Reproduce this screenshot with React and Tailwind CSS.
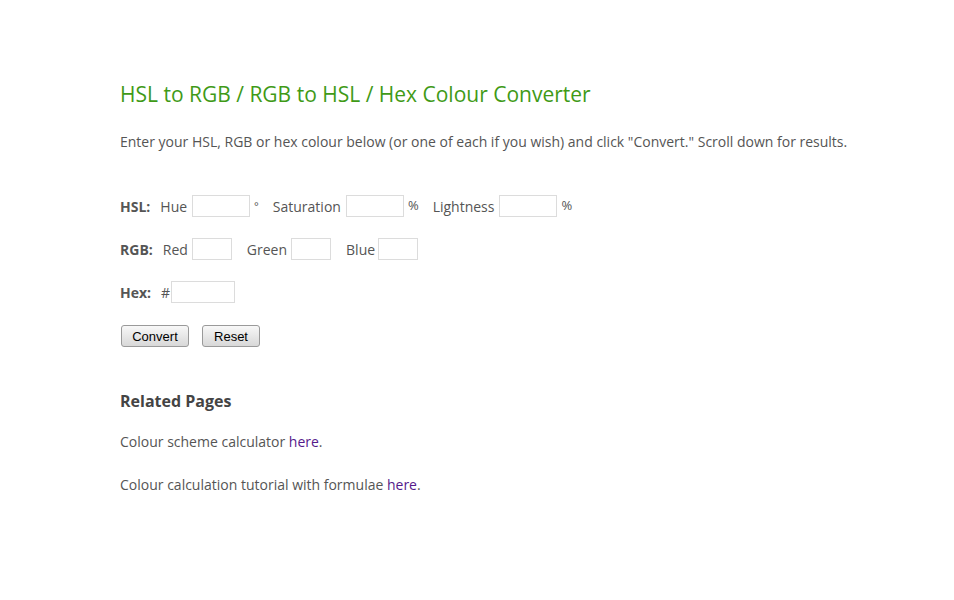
export default function App() {
  const input = 'h-[22px] border border-[#dcdcdc] bg-white outline-none'
  const btn =
    'h-[22px] rounded-[3px] border border-[#9a9a9a] bg-gradient-to-b from-[#f8f8f8] to-[#d8d8d8] text-[13px] leading-none text-black'

  return (
    <div className="min-h-[600px] bg-white pl-[120px] pt-[80px] text-[14px] text-[#555] [font-family:'Open_Sans',sans-serif]">
      <h1 className="text-[21px] leading-[29px] text-[#3f9a17]">
        HSL to RGB / RGB to HSL / Hex Colour Converter
      </h1>
      <p className="mt-[23px] leading-[20px]">
        Enter your HSL, RGB or hex colour below (or one of each if you wish) and click "Convert." Scroll down for results.
      </p>

      <div className="mt-[43px] flex h-[22px] items-center">
        <span className="font-bold">HSL:</span>
        <span className="ml-[10px]">Hue</span>
        <input className={`ml-[5px] w-[58px] ${input}`} />
        <span className="ml-[4px] text-[11px]">°</span>
        <span className="ml-[14px]">Saturation</span>
        <input className={`ml-[5px] w-[58px] ${input}`} />
        <span className="ml-[4px] text-[13px]">%</span>
        <span className="ml-[14px]">Lightness</span>
        <input className={`ml-[5px] w-[58px] ${input}`} />
        <span className="ml-[4px] text-[13px]">%</span>
      </div>

      <div className="mt-[21px] flex h-[22px] items-center">
        <span className="font-bold">RGB:</span>
        <span className="ml-[10px]">Red</span>
        <input className={`ml-[4px] w-[40px] ${input}`} />
        <span className="ml-[15px]">Green</span>
        <input className={`ml-[4px] w-[40px] ${input}`} />
        <span className="ml-[15px]">Blue</span>
        <input className={`ml-[3px] w-[40px] ${input}`} />
      </div>

      <div className="mt-[21px] flex h-[22px] items-center">
        <span className="font-bold">Hex:</span>
        <span className="ml-[10px]">#</span>
        <input className={`ml-[1px] w-[64px] ${input}`} />
      </div>

      <div className="ml-[1px] mt-[22px] flex items-center gap-[13px] [font-family:'Liberation_Sans',Arial,sans-serif]">
        <button className={`${btn} w-[68px]`}>Convert</button>
        <button className={`${btn} w-[58px]`}>Reset</button>
      </div>

      <h2 className="mt-[43px] text-[16px] font-bold leading-[22px] text-[#444]">Related Pages</h2>
      <p className="mt-[20px] leading-[20px]">
        Colour scheme calculator <a className="text-[#551a8b]">here</a>.
      </p>
      <p className="mt-[23px] leading-[20px]">
        Colour calculation tutorial with formulae <a className="text-[#551a8b]">here</a>.
      </p>
    </div>
  )
}
